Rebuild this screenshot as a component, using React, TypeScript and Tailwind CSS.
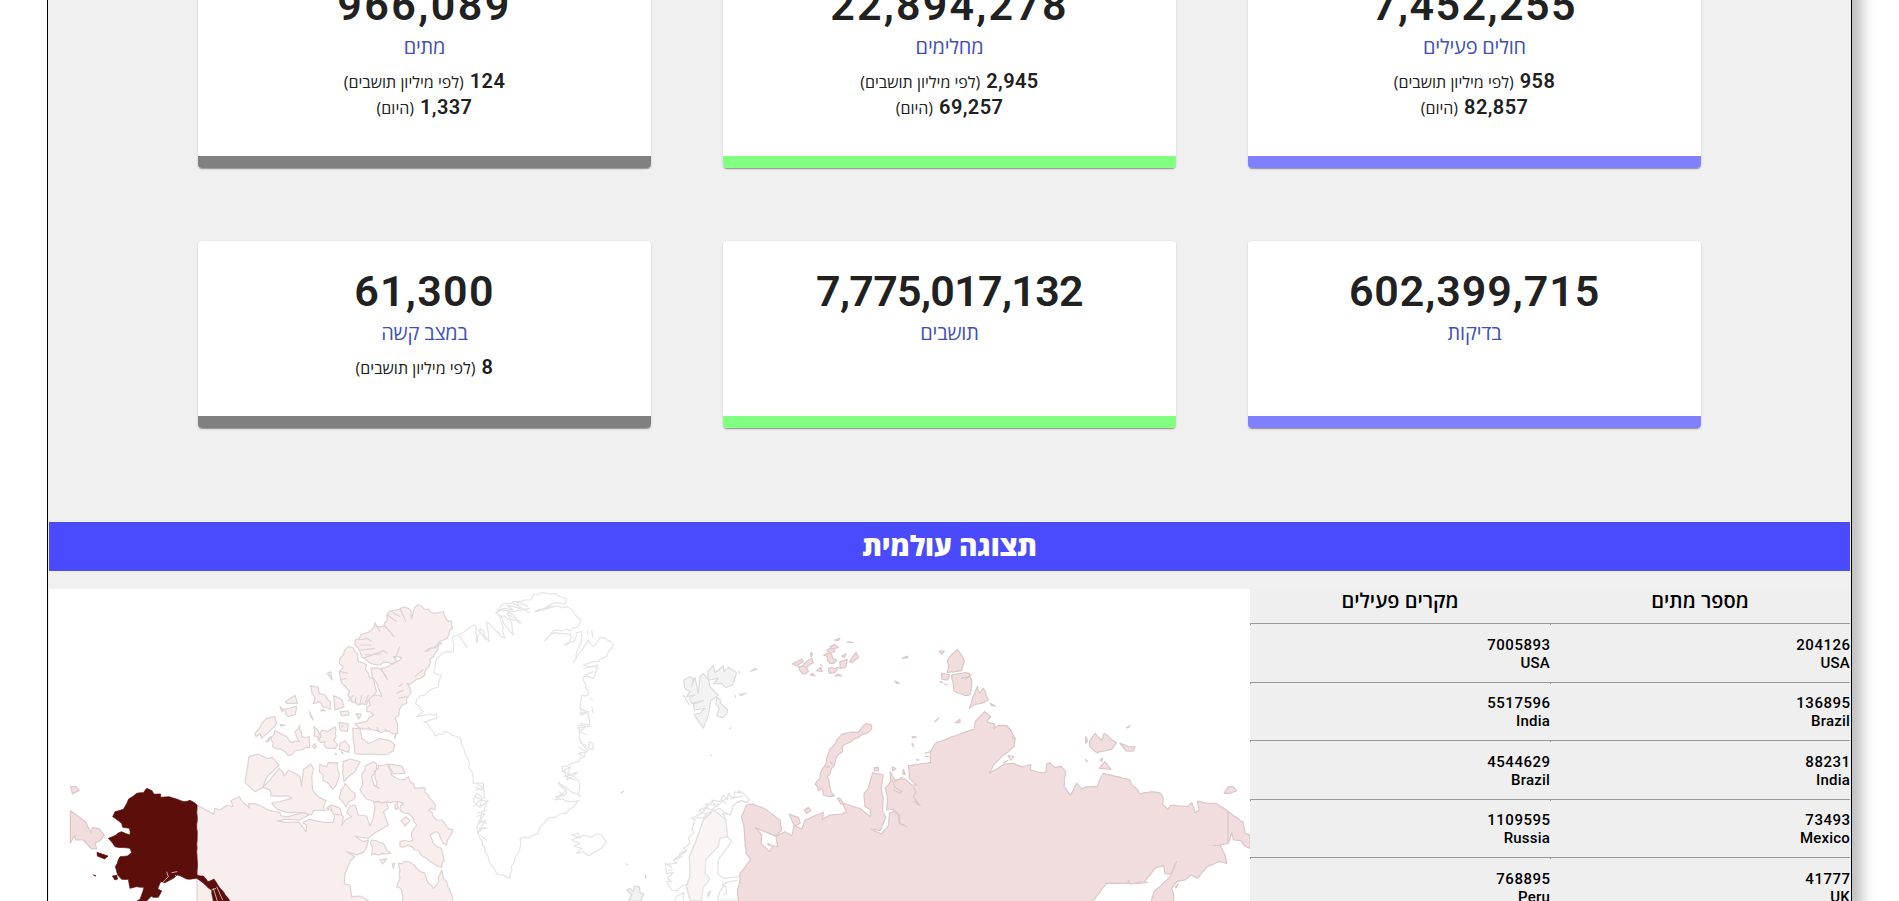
type Sub = { value: string; note: string };
type Stat = { value: string; label: string; subs: Sub[]; bar: string; track: string };

const PER_MILLION = "(לפי מיליון תושבים)";
const TODAY = "(היום)";

const GRAY = "bg-[#808080]";
const GREEN = "bg-[#80ff80]";
const BLUE = "bg-[#8080ff]";

const topRow: Stat[] = [
  { value: "7,452,255", label: "חולים פעילים", bar: BLUE, track: "tracking-[1.4px]", subs: [{ value: "958", note: PER_MILLION }, { value: "82,857", note: TODAY }] },
  { value: "22,894,278", label: "מחלימים", bar: GREEN, track: "tracking-[2.2px]", subs: [{ value: "2,945", note: PER_MILLION }, { value: "69,257", note: TODAY }] },
  { value: "966,089", label: "מתים", bar: GRAY, track: "tracking-[2.4px]", subs: [{ value: "124", note: PER_MILLION }, { value: "1,337", note: TODAY }] },
];

const bottomRow: Stat[] = [
  { value: "602,399,715", label: "בדיקות", bar: BLUE, track: "tracking-[0.9px]", subs: [] },
  { value: "7,775,017,132", label: "תושבים", bar: GREEN, track: "tracking-[-0.7px]", subs: [] },
  { value: "61,300", label: "במצב קשה", bar: GRAY, track: "tracking-[1.3px]", subs: [{ value: "8", note: PER_MILLION }] },
];

const deaths = [
  ["204126", "USA"],
  ["136895", "Brazil"],
  ["88231", "India"],
  ["73493", "Mexico"],
  ["41777", "UK"],
];

const active = [
  ["7005893", "USA"],
  ["5517596", "India"],
  ["4544629", "Brazil"],
  ["1109595", "Russia"],
  ["768895", "Peru"],
];

function StatCard({ stat }: { stat: Stat }) {
  return (
    <div className="flex w-[453px] flex-col overflow-hidden rounded-[4px] bg-white text-center text-[#212121] shadow-[0_2px_1px_-1px_rgba(0,0,0,0.2),0_1px_1px_0_rgba(0,0,0,0.14),0_1px_3px_0_rgba(0,0,0,0.12)]">
      <div className="flex-1 pt-[25px]">
        <div className={`h-[50px] text-[43px] leading-[50px] font-semibold ${stat.track}`}>{stat.value}</div>
        <div className="mt-[3px] h-7 font-['Open_Sans',sans-serif] text-[20px] leading-7 tracking-[-0.2px] text-[#3f51b5]">{stat.label}</div>
        <div className="mt-[7px]">
          {stat.subs.map((s) => (
            <div key={s.note} className="flex h-[26px] items-baseline justify-center gap-[6px] leading-[26px]">
              <span className="text-[20px] font-semibold tracking-[0.4px]">{s.value}</span>
              <span className="font-['Open_Sans',sans-serif] text-[16px]">{s.note}</span>
            </div>
          ))}
        </div>
      </div>
      <div className={`h-3 ${stat.bar}`} />
    </div>
  );
}

function Column({ title, rows }: { title: string; rows: string[][] }) {
  return (
    <div className="w-[300px]">
      <div className="h-[34px] text-center font-['Open_Sans',sans-serif] text-[20px] leading-6 font-semibold">{title}</div>
      {rows.map(([count, country]) => (
        <div
          key={country}
          className="relative h-[58.5px] border-t border-[#999] pt-[11.5px] text-right text-[15px] leading-[18px] font-medium before:absolute before:top-0 before:left-0 before:h-px before:w-px before:bg-[#999]"
          dir="ltr"
        >
          <div className="-mr-[0.5px] tracking-[0.5px]">{count}</div>
          <div className="tracking-[0.2px]">{country}</div>
        </div>
      ))}
    </div>
  );
}

/* Turns a coarse outline into a ragged coastline; the noise is seeded so it is stable. */
function coast(points: string, amp: number, step = 12): string {
  const pts = points.trim().split(/\s+/).map((p) => p.split(",").map(Number));
  let seed = pts.length * 7919 + pts[0][0];
  const rnd = () => {
    seed = (seed * 16807) % 2147483647;
    return seed / 2147483647 - 0.5;
  };
  let d = "";
  pts.forEach(([x, y], i) => {
    const [nx, ny] = pts[(i + 1) % pts.length];
    const len = Math.hypot(nx - x, ny - y);
    const n = Math.max(1, Math.round(len / step));
    for (let k = 0; k < n; k++) {
      const t = k / n;
      const off = k === 0 ? 0 : rnd() * amp * 2;
      const px = x + (nx - x) * t - ((ny - y) / len) * off;
      const py = y + (ny - y) * t + ((nx - x) / len) * off;
      d += `${i === 0 && k === 0 ? "M" : "L"}${px.toFixed(1)},${py.toFixed(1)}`;
    }
  });
  return d + "Z";
}

const canadaWest: [string, number][] = [
  ["471,735 522,763 524,745 540,750 560,736 580,740 572,722 597,710 612,730 629,744 625,730 650,732 690,752 719,757 724,768 745,770 800,755 806,765 780,780 735,778 712,783 735,787 776,786 798,815 800,795 788,788 808,778 850,787 880,787 884,765 870,748 890,752 910,770 905,798 915,780 935,770 920,758 930,738 945,735 955,765 980,768 990,798 1000,775 1005,740 1000,725 1040,728 1045,745 1030,755 1045,795 1020,810 1000,822 985,835 945,829 970,845 985,840 980,862 970,877 950,885 920,875 945,890 930,905 915,940 913,972 930,975 935,1010 960,1008 1000,1030 471,1030", 0],
  ["627,590 655,582 680,595 697,593 717,615 680,652 668,683 645,695 615,668", 0],
  ["717,625 728,635 733,648 745,630 765,640 780,650 785,680 790,628 800,622 812,612 820,625 815,650 818,690 835,710 858,722 850,740 855,752 820,752 815,765 790,758 740,757 712,748 695,730 755,715 745,708 693,708 690,690 668,683 690,660", 1],
  ["840,612 860,620 865,607 893,608 898,640 892,665 878,688 865,670 848,660 850,645 838,635", 5],
  ["910,605 930,597 960,605 945,635 925,650 912,665 908,640", 0],
  ["915,670 945,700 940,720 925,725 918,742 897,715 903,690", 3],
  ["695,530 705,512 730,525 755,548 778,545 765,515 780,495 785,530 808,530 808,563 775,570 745,587 722,568 697,560", 4],
  ["645,520 680,475 705,470 710,490 690,512 675,525 665,535 660,520 648,530", 3],
  ["737,425 765,406 773,430 740,430", 0],
  ["735,447 770,440 766,463 745,470 737,462", 0],
  ["811,377 835,381 838,400 855,405 872,428 870,448 848,440 838,425 820,430 825,412 816,400", 2],
  ["881,407 905,418 912,440 885,450", 0],
  ["862,340 872,335 876,360", 0],
  ["897,487 925,492 922,515 900,510", 0],
  ["900,550 915,542 928,560 927,577 898,568", 0],
  ["845,510 862,515 885,500 888,530 886,565 860,565 855,545 835,540", 7],
  ["821,500 838,520 836,540 822,528", 6],
  ["808,455 820,480 812,470", 0],
  ["900,455 925,453 927,465 905,467", 0],
  ["950,460 962,465 955,477", 0],
  ["872,735 900,745 905,765 880,762", 2],
  ["720,440 732,450 725,455", 0],
  ["720,493 735,496 722,498", 0],
  ["678,545 692,530 685,545", 0],
  ["818,560 824,551 830,560 824,566", 0],
  ["842,452 855,453 848,448", 0],
  ["905,500 908,497 906,503", 0],
  ["885,580 890,582 886,584", 0],
  ["905,575 910,580 906,580", 0],
  ["860,745 868,738 864,752", 0],
  ["1065,735 1072,728 1075,745 1066,748", 2],
];

const canadaEast: [string, number][] = [
  ["165,180 195,160 215,150 225,128 240,140 250,140 262,120 260,105 285,90 305,83 325,85 335,115 345,82 365,78 385,88 405,100 430,95 435,110 455,125 458,145 430,180 375,215 425,190 400,230 385,262 362,295 340,305 320,310 330,325 328,345 320,370 300,385 297,405 285,415 292,430 293,460 270,455 220,450 180,445 165,430 200,425 220,405 200,395 210,375 210,350 245,350 235,325 215,275 212,265 240,265 262,298 245,265 300,240 305,233 280,230 290,245 240,255 205,245 185,230 180,215 165,195", 6],
  ["145,200 165,215 175,245 200,255 205,280 225,320 230,335 210,355 200,375 175,375 155,365 140,325 125,310 118,275 130,262 118,250 130,225", 7],
  ["158,445 180,445 185,475 205,490 240,475 270,482 285,495 280,512 262,523 195,523 165,520 160,480", 1],
  ["185,640 185,590 195,560 210,550 230,552 215,590 222,615 238,625 225,585 235,555 262,552 275,585 300,600 325,590 345,625 375,625 390,655 400,665 405,690 385,690 400,710 425,720 440,740 458,748 450,770 440,795 420,770 410,755 390,765 400,790 425,805 430,830 425,862 400,850 370,830 345,810 335,800 300,800 300,785 340,780 335,760 350,735 340,715 325,700 300,690 310,670 285,665 270,668 235,665 210,660", 6],
  ["265,552 305,558 315,580 280,582", 0],
  ["295,850 325,845 350,865 375,880 385,910 400,925 410,915 425,870 430,895 440,905 455,945 460,970 310,970 305,930 290,920 300,895", 3],
  ["215,780 250,790 272,820 235,825 215,825", 5],
  ["303,722 318,710 330,722 315,738", 0],
  ["240,840 260,836 248,852", 0],
  ["277,852 284,850 280,865", 0],
  ["168,402 184,402 178,416", 0],
  ["283,472 288,462 285,475", 0],
];

const greenland: [string, number][] = [
  ["458,170 475,165 500,150 525,135 530,190 540,145 568,185 558,125 615,175 600,108 640,165 625,95 660,130 590,100 600,80 640,65 690,60 700,42 730,38 765,40 800,58 795,72 765,68 705,95 765,78 810,85 842,120 830,142 810,152 765,150 733,183 765,158 812,162 810,185 793,195 822,185 830,158 845,155 843,190 820,248 865,180 880,200 900,172 915,175 940,195 920,228 895,245 850,255 895,262 880,295 850,290 865,345 845,345 840,400 865,395 870,440 835,435 845,490 865,510 835,545 785,560 800,590 835,600 840,650 775,610 800,640 765,660 835,662 800,700 740,718 715,758 685,775 660,775 655,820 640,850 630,895 590,882 570,850 548,795 530,740 545,700 565,660 535,680 520,665 530,640 555,655 550,610 520,610 505,540 495,520 483,480 435,455 405,468 385,435 370,425 410,415 410,402 350,410 370,395 347,372 350,358 385,335 415,322 425,285 400,275 410,235 440,215 460,215", 4],
];

const greenlandFjords =
  "M475,165L502,203M535,150L560,180M620,100L665,128M590,88L640,95L690,85M585,100L610,85L640,90L620,75L660,85L650,65L685,80M640,70L690,98M705,95L765,80M850,265L895,255M855,285L880,275M838,385L862,395L840,405L860,400M840,430L868,435M832,445L858,440L838,455L860,465M838,485L862,500M835,500L860,515L835,520L855,530M785,570L830,595M790,590L835,575M785,575L810,560L800,600L830,580M770,655L800,630M775,605L790,625M765,650L795,645L775,635M530,700L562,690M535,720L560,730M535,745L562,745M530,710L555,700L535,730L558,720L532,760L556,740M540,765L560,780M525,650L560,665M520,680L545,655L540,685M525,620L555,635M530,610L550,625L525,630M862,150L864,165M875,150L878,172M870,355L878,360M875,380L880,400M865,485L880,490L878,508L866,505L868,488";

const russia: [string, number][] = [
  ["320,675 340,672 380,690 420,720 425,750 405,768 345,743 365,765 363,790 388,815 398,800 383,790 385,795 413,800 408,770 435,755 455,768 462,735 447,702 475,712 480,730 465,738 485,747 495,720 530,705 550,697 548,718 570,705 605,702 620,695 605,668 660,685 690,710 692,690 675,680 672,640 685,625 698,578 730,585 724,625 730,655 728,695 738,712 720,752 692,747 725,762 746,735 748,700 765,693 778,705 780,730 800,740 778,730 775,705 760,688 740,690 742,650 735,625 752,605 750,575 765,600 795,597 815,615 830,615 808,595 805,557 872,547 870,515 890,487 925,475 960,462 1003,448 1006,425 1034,395 1052,410 1040,425 1065,432 1060,447 1075,437 1100,437 1112,450 1126,475 1122,500 1085,530 1060,555 1048,580 1065,570 1095,552 1120,550 1145,560 1172,554 1172,570 1195,577 1218,577 1220,552 1230,548 1245,562 1265,560 1277,575 1272,620 1292,645 1310,610 1325,627 1340,620 1372,620 1378,600 1390,580 1470,600 1475,615 1490,625 1500,642 1535,635 1562,640 1570,655 1568,672 1583,688 1592,676 1642,680 1655,668 1665,698 1678,690 1672,663 1705,670 1728,670 1765,695 1810,727 1815,760 1830,765 1830,805 1810,795 1803,782 1780,780 1775,758 1765,790 1740,795 1755,825 1760,850 1735,845 1700,862 1672,895 1652,885 1635,900 1610,905 1595,925 1600,940 1603,975 1530,975 1542,935 1590,890 1610,845 1595,880 1575,882 1572,857 1548,862 1515,905 1470,912 1465,900 1465,910 1400,910 1350,975 300,975 292,940 300,900 300,880 332,838 318,820 312,740 304,710", 1],
  ["525,612 540,595 545,570 560,540 568,510 590,480 615,460 655,457 680,430 695,435 688,455 645,475 610,495 608,515 590,530 580,560 562,590 568,615 583,648 550,645 545,625 535,632", 4],
  ["922,240 952,208 973,243 965,272 922,278 926,260", 2],
  ["935,285 975,278 988,280 995,300 990,345 975,347 942,333", 2],
  ["988,385 1012,320 1020,340 1030,325 1045,360 1030,368 1005,373", 2],
  ["1348,485 1365,460 1385,480 1392,460 1430,488 1415,508 1370,518 1350,500", 2],
  ["1440,490 1465,500 1485,500 1480,513 1458,513", 1],
  ["1378,565 1395,545 1413,568", 0],
  ["1380,540 1388,534 1386,544", 0],
  ["1752,640 1765,620 1780,620 1790,632 1770,640", 0],
  ["703,563 715,562 715,573 703,573", 0],
  ["493,690 505,682 513,692 500,700", 0],
  ["592,655 600,655 612,672 603,672", 0],
  ["904,280 930,285 923,300 906,298", 1],
  ["457,252 485,237 490,245 470,258", 1],
  ["500,245 515,235 520,248 500,262 490,280 478,270", 5],
  ["475,260 500,262 505,275 485,280", 5],
  ["512,217 518,222 513,230", 0],
  ["550,225 575,222 590,240 570,250", 7],
  ["560,210 580,205 585,215 565,216", 4],
  ["600,245 622,238 617,262 600,265", 0],
  ["628,245 648,217 656,232 635,248", 0],
  ["605,228 618,222 614,232", 0],
  ["565,265 595,262 585,278 568,280", 3],
  ["583,180 600,175 595,182", 0],
  ["570,200 585,193 595,202 575,206", 3],
  ["530,272 542,262 547,275", 0],
  ["585,288 605,288 595,282", 0],
  ["510,285 525,288 518,280", 0],
  ["787,235 803,228 803,233", 0],
  ["765,303 778,310 770,310", 0],
  ["897,213 913,213 905,222", 0],
  ["945,428 960,418 960,428", 0],
  ["883,425 897,414 887,423", 0],
  ["816,470 830,471 820,474", 0],
  ["815,492 820,500 818,490", 0],
  ["1051,370 1066,378 1055,378", 0],
  ["1337,470 1343,482 1337,490", 0],
  ["1460,443 1470,437 1463,444", 0],
  ["1336,538 1343,544 1339,543", 0],
  ["790,568 796,584 788,582", 0],
  ["757,560 768,566 758,572", 0],
  ["830,538 837,540 832,541", 0],
  ["1607,920 1615,912 1608,924", 0],
  ["622,185 640,187 630,187", 0],
];

const norway =
  "M165,718L155,715L185,700L180,688L205,685L195,672L225,675L215,660L240,665L250,645L262,660L265,640L280,655L285,635L300,640L295,632L310,640L328,658L318,668L305,662L290,668L278,680L270,705L250,695L240,685L225,690L200,700L190,715L172,712ZM185,700L215,665M230,680L265,650M270,655L310,648M165,720L155,750L163,755L145,775L150,790L130,805L140,812L118,820L125,830L100,840L110,850L85,852L95,862L76,850L80,880L100,878L82,895L95,905L80,905L95,930L110,932L130,915L142,915L150,890L148,830L165,790L180,750L190,720L215,695M100,840L140,812M85,870L100,870M150,960L138,915M105,960L110,948L132,938L130,960M175,690L200,705M190,680L215,690L235,670M245,660L260,672";

const finland =
  "M328,668L305,662L290,668L278,680L270,705L248,700L258,720L262,770L275,785L235,838L233,880L250,895L318,888M318,888L300,900L295,960L232,960L240,935L258,908L295,900M245,915L258,920L260,940L250,945M250,920L248,905";

const sweden =
  "M222,690L258,720L262,770L240,775L235,800L198,838L195,880L210,895L200,912L190,920L185,962L152,962L138,915L150,890L148,830L165,790L180,750L190,720Z";

const iceland =
  "M815,765L835,760L838,775L850,765L875,772L890,762L905,765L918,785L905,805L865,827L850,815L830,820L845,805L822,798L840,790L815,780L835,772Z";

const alaska =
  "320,685 336,692 342,703 362,702 362,712 388,710 432,725 450,721 471,735 471,945 490,948 504,965 522,957 570,1023 575,1045 520,1025 515,990 470,955 440,957 412,945 400,955 375,968 362,965 352,990 320,1023 280,1045 270,1030 300,1018 312,982 290,980 270,985 265,958 245,958 233,945 226,920 240,890 262,888 275,878 270,865 225,860 217,848 205,835 245,815 270,825 268,805 248,802 245,790 218,770 225,755 250,748 266,717 290,700 310,698";

function Shapes({ list }: { list: [string, number][] }) {
  return (
    <>
      {list.map(([pts, amp]) => (
        <path key={pts} d={coast(pts, amp)} />
      ))}
    </>
  );
}

function WorldMap() {
  return (
    <svg className="block h-[312px] w-[1201px] bg-white" viewBox="0 0 3603 936" strokeWidth={3.6} strokeLinejoin="round">
      <g transform="translate(-27 -87)">
        <g fill="#f9eeee" stroke="#ddd3d1">
          <Shapes list={canadaWest} />
        </g>
        <g fill="#f1dddd" stroke="#dbc7c7">
          <path d="M91,752L138,786L143,800L153,817L157,803L178,806L193,827L180,842L165,850L170,866L155,867L130,840L107,840L104,826L91,850Z" />
          <path d="M92,680L108,680L118,691L97,701Z" />
        </g>
        <g fill="#5c0e0b" stroke="#5c0e0b" strokeWidth={2}>
          <path d={coast(alaska, 1.5)} />
          <path d="M171,877L204,888L194,897L172,888ZM160,944L168,948L163,947ZM217,948L230,946L233,957L225,960ZM335,1005L350,985L365,993L355,1012L338,1012Z" />
        </g>
        <path d="M368,968L385,950L380,935M395,938L412,935M405,945L412,952M520,985L532,1023M530,980L548,1020M515,990L528,985" fill="none" stroke="#fff" strokeWidth={2} />
      </g>
      <g transform="translate(753 -27)">
        <g fill="#f9eeee" stroke="#ddd3d1">
          <Shapes list={canadaEast} />
          <path
            d="M195,170L215,185M225,130L240,155M252,135L283,171M262,105L290,125M275,95L300,110M300,85L318,125M175,180L205,175M180,195L215,195M180,210L225,205M190,235L250,212L262,220M195,225L245,222M300,200L285,235M120,275L145,280M120,300L140,295M145,365L160,345M165,370L168,350M180,372L185,345M195,370L205,345M310,330L290,340M320,350L295,355M310,310L295,320M345,290L370,268M230,440L238,455M255,445L262,455M205,440L210,452"
            fill="none"
          />
        </g>
        <g fill="#fff" stroke="#e4e4e4">
          <Shapes list={greenland} />
          <path d={greenlandFjords} fill="none" />
          <path d={iceland} />
        </g>
        <path d="M962,640L972,633" stroke="#d0d0d0" />
        <path d="M1036,885L1037,896M978,850L983,856" stroke="#d8d0d0" />
        <path d="M980,930L990,925L1000,935L1003,918L1018,920L1020,938L1031,942L1022,963L985,963L995,945Z" fill="#f1f1f1" stroke="#d9d9d9" />
      </g>
      <g transform="translate(1773 -27)">
        <path d={sweden} fill="#faf4f4" stroke="#e3e0e0" />
        <g fill="none" stroke="#e2e2e2">
          <path d={norway} />
          <path d={finland} />
        </g>
        <path d="M203,940L212,933L205,952Z" fill="#f3f3f3" stroke="#ddd" />
        <g fill="#f3f3f3" stroke="#dcdcdc">
          <path d="M131,300L148,290L160,295L155,320L165,292L175,340L180,290L190,280L205,298L210,320L235,345L212,362L205,405L190,445L162,403L180,400L195,385L163,390L160,372L190,362L155,370L148,355L165,345L140,350L150,335L135,325Z" />
          <path d="M203,275L220,256L225,278L250,258L252,275L265,262L290,278L278,315L258,323L245,310L220,312L235,295L205,300Z" />
          <path d="M230,352L240,358L242,370L262,388L262,400L248,413L230,408L238,385L228,372Z" />
          <path d="M330,275L345,265L352,268ZM298,342L318,340L302,347ZM268,447L273,443ZM285,345L287,352ZM130,345L147,373ZM297,273L298,281ZM211,525L215,527Z" />
        </g>
        <g fill="#f1dddd" stroke="#dbc7c7">
          <Shapes list={russia} />
          <path
            d="M1764,695L1764,790M1718,797L1740,795M757,600L765,622L785,635L780,640L760,630M820,620L828,635L820,650L840,677L822,663M570,545L580,555M555,562L570,560M1102,440L1115,455M1115,470L1125,480M855,520L872,515M855,530L868,530M975,300L995,282M963,295L985,290M898,305L910,308M912,312L922,314M540,253L548,260M765,605L790,590M1090,550L1105,540M1105,527L1122,530L1112,540Z"
            fill="none"
          />
          <path d="M1485,912L1525,907" />
        </g>
      </g>
    </svg>
  );
}

export default function App() {
  return (
    <div className="h-[901px] overflow-hidden bg-white pl-[47px] font-[Roboto,'Open_Sans',sans-serif] text-black">
      <div dir="rtl" className="h-[1000px] w-[1805px] border-x border-black bg-[#f0f0f0] px-px shadow-[10px_0_12px_rgba(0,0,0,0.25)]">
        <div className="-mt-[45px] flex h-[213px] justify-center gap-[72px]">
          {topRow.map((s) => (
            <StatCard key={s.label} stat={s} />
          ))}
        </div>
        <div className="mt-[73px] flex h-[187px] justify-center gap-[72px]">
          {bottomRow.map((s) => (
            <StatCard key={s.label} stat={s} />
          ))}
        </div>
        <div className="mt-[94px] h-[49px] bg-[#4a4aff] text-center font-['Open_Sans',sans-serif] text-[28px] leading-[47px] font-extrabold tracking-[-0.1px] text-white">תצוגה עולמית</div>
        <div className="mt-[18px] flex h-[312px] w-[1801px] overflow-hidden bg-[#efefef]">
          <Column title="מספר מתים" rows={deaths} />
          <Column title="מקרים פעילים" rows={active} />
          <div dir="ltr">
            <WorldMap />
          </div>
        </div>
      </div>
    </div>
  );
}
